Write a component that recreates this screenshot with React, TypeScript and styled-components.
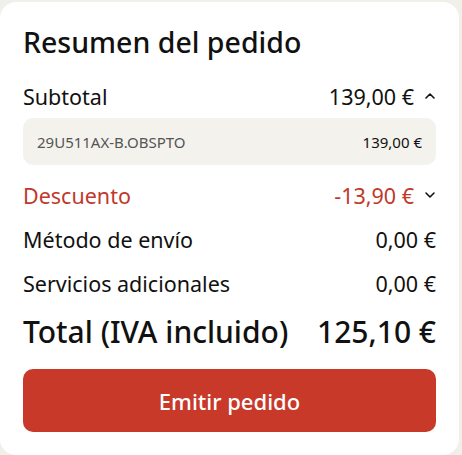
import styled, { createGlobalStyle } from "styled-components";

const GlobalStyle = createGlobalStyle`
  body {
    margin: 0;
    background: #f1efea;
    font-family: "Noto Sans", "Open Sans", sans-serif;
    color: #111;
  }
`;

const Card = styled.div`
  box-sizing: border-box;
  width: 459px;
  height: 453px;
  margin-top: 2px;
  background: #fff;
  border-radius: 16px;
  padding: 21px 23px 0 23px;
  display: flex;
  flex-direction: column;
`;

const Title = styled.h2`
  margin: 0 0 13px;
  font-size: 28.5px;
  font-weight: 500;
  line-height: 38px;
`;

const Row = styled.div<{ $red?: boolean }>`
  display: flex;
  justify-content: space-between;
  align-items: center;
  height: 44px;
  font-size: 21.5px;
  color: ${(p) => (p.$red ? "#c0392b" : "#111")};
`;

const Value = styled.div`
  display: flex;
  align-items: center;
  gap: 10px;
`;

const Detail = styled.div`
  display: flex;
  justify-content: space-between;
  align-items: center;
  height: 47px;
  margin: 0 0 8px;
  padding: 0 14px;
  background: #f4f2ec;
  border-radius: 10px;
  font-size: 15px;
  color: #555;

  span:last-child {
    color: #111;
  }
`;

const TotalRow = styled.div`
  display: flex;
  justify-content: space-between;
  align-items: center;
  margin-top: 2px;
  height: 48px;
  font-size: 30px;
  font-weight: 500;
`;

const Button = styled.button`
  margin-top: 14px;
  height: 63px;
  border: none;
  border-radius: 10px;
  background: #c8392a;
  color: #fff;
  font-family: inherit;
  font-size: 22px;
  font-weight: 500;
`;

function Chevron({ up }: { up?: boolean }) {
  return (
    <svg width="12" height="12" viewBox="0 0 12 12" fill="none">
      <path
        d={up ? "M2 8l4-4 4 4" : "M2 4l4 4 4-4"}
        stroke="#111"
        strokeWidth="1.6"
        strokeLinecap="round"
        strokeLinejoin="round"
      />
    </svg>
  );
}

export default function App() {
  return (
    <>
      <GlobalStyle />
      <Card>
        <Title>Resumen del pedido</Title>
        <Row>
          <span>Subtotal</span>
          <Value>
            139,00 € <Chevron up />
          </Value>
        </Row>
        <Detail>
          <span>29U511AX-B.OBSPTO</span>
          <span>139,00 €</span>
        </Detail>
        <Row $red>
          <span>Descuento</span>
          <Value>
            -13,90 € <Chevron />
          </Value>
        </Row>
        <Row>
          <span>Método de envío</span>
          <span>0,00 €</span>
        </Row>
        <Row>
          <span>Servicios adicionales</span>
          <span>0,00 €</span>
        </Row>
        <TotalRow>
          <span>Total (IVA incluido)</span>
          <span>125,10 €</span>
        </TotalRow>
        <Button>Emitir pedido</Button>
      </Card>
    </>
  );
}
